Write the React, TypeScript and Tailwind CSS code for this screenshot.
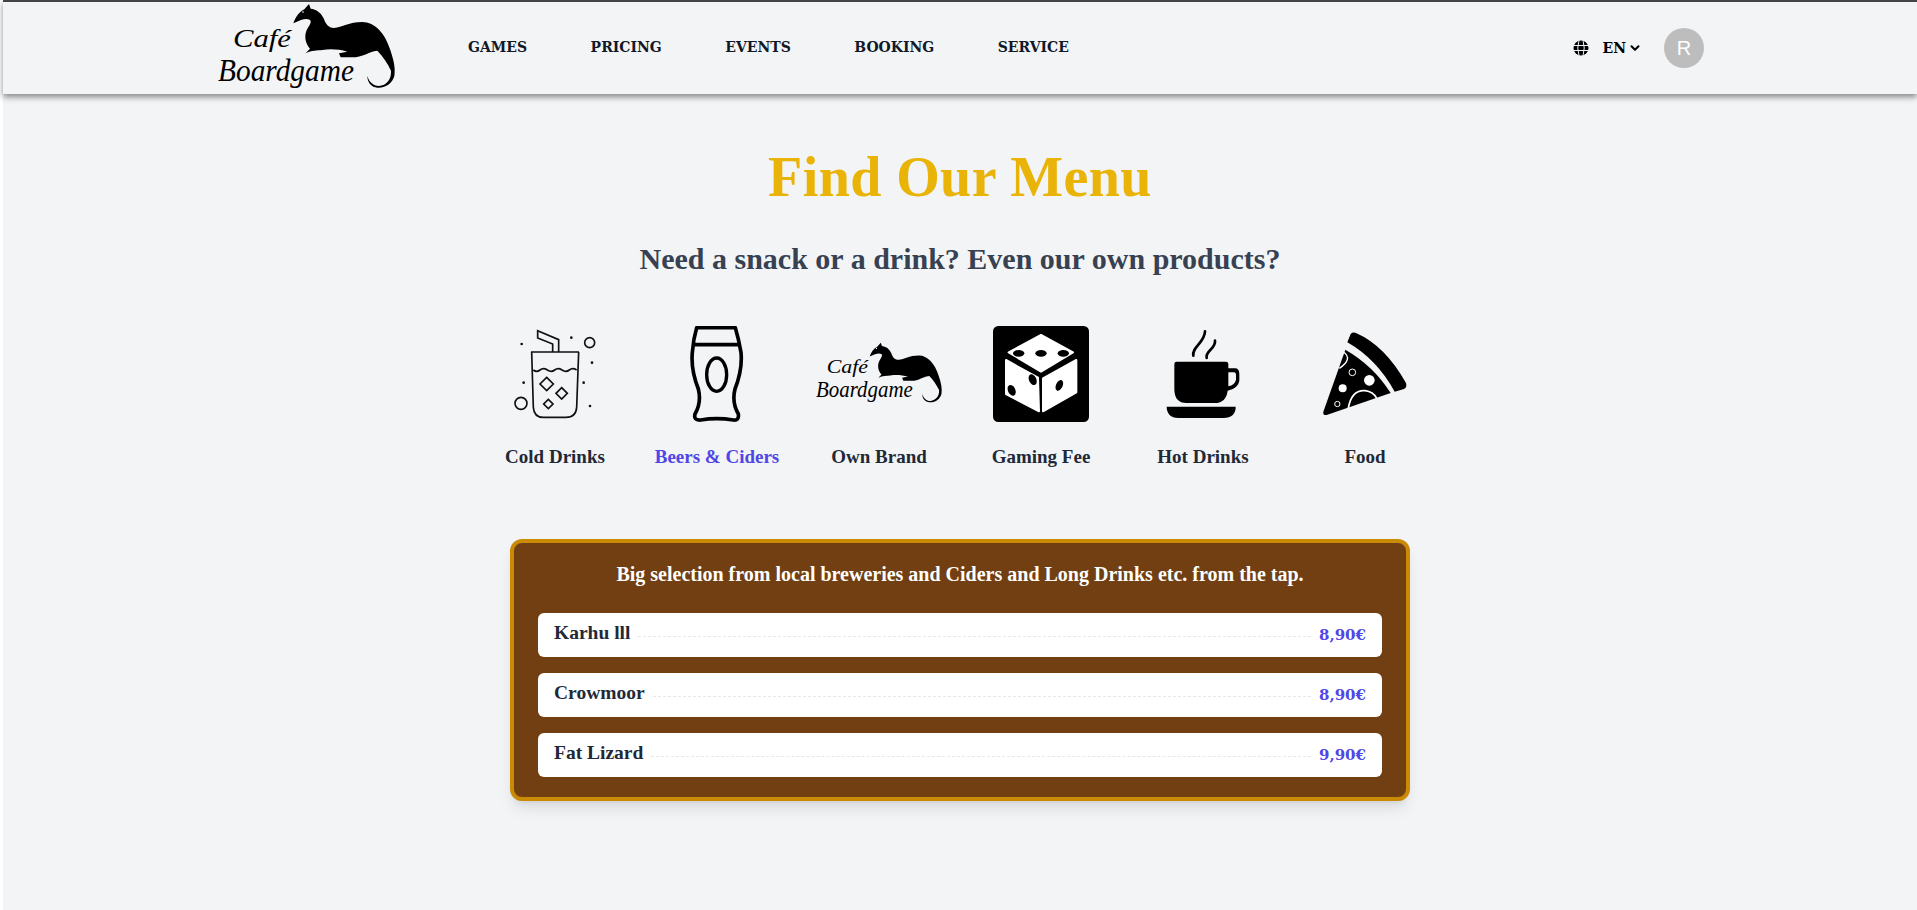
import React from 'react';
import { ChevronDown } from 'lucide-react';

const serif = 'font-["Liberation_Serif",serif]';

const NAV = ['GAMES', 'PRICING', 'EVENTS', 'BOOKING', 'SERVICE'];

const ITEMS = [
  { name: 'Karhu lll', price: '8,90€' },
  { name: 'Crowmoor', price: '8,90€' },
  { name: 'Fat Lizard', price: '9,90€' },
];

const Logo = ({ className }: { className: string }) => (
  <svg viewBox="18 3 179 90" className={className}>
    <path
      transform="scale(0.3333)"
      fill="#000"
      d="M283 70 C290 52 298 38 316 28 L330 12 L335 26 C352 28 366 38 374 55 C380 72 388 84 405 84 C430 82 450 66 490 66 C528 66 558 100 574 150 C584 180 590 205 586 228 C580 250 560 265 535 263 C518 262 505 248 505 228 C510 245 522 258 540 258 C562 256 578 238 576 212 C566 190 552 170 535 152 C520 152 500 166 470 172 L425 172 L420 160 L445 155 C420 148 395 146 370 150 C355 152 338 150 320 160 L333 146 C318 130 314 105 326 85 C334 72 338 66 333 60 C323 54 310 57 283 70 Z"
    />
    <circle cx="104" cy="12" r="0.8" fill="#fff" />
    <text
      x="34"
      y="47"
      fontSize="26"
      fontStyle="italic"
      fontFamily="'Liberation Serif', serif"
      textLength="58"
      lengthAdjust="spacingAndGlyphs"
    >
      Café
    </text>
    <text
      x="19"
      y="81"
      fontSize="31"
      fontStyle="italic"
      fontFamily="'Liberation Serif', serif"
      textLength="136"
      lengthAdjust="spacingAndGlyphs"
    >
      Boardgame
    </text>
  </svg>
);

const DrinkIcon = () => (
  <svg viewBox="81 51 288 288" className="w-24 h-24" fill="none" stroke="#111" strokeWidth="5">
    <path d="M153 129 H297 M155 129 L160 295 Q162 325 190 325 H258 Q288 325 290 295 L296 129" />
    <path d="M160 183 q10 8 20 0 t22 0 t22 0 t22 0 t22 0 t22 0" />
    <path d="M218 129 V105 L173 87 V65 L236 92 V129" />
    <path d="M200 205 L220 225 L200 245 L180 225 Z M245 236 L262 253 L245 270 L228 253 Z M205 271 L219 285 L205 299 L191 285 Z" />
    <circle cx="329" cy="101" r="15" />
    <circle cx="123" cy="283" r="18" />
    <g fill="#111" stroke="none">
      <circle cx="125" cy="105" r="4" />
      <circle cx="274" cy="86" r="4" />
      <circle cx="336" cy="161" r="4" />
      <circle cx="131" cy="221" r="4" />
      <circle cx="311" cy="221" r="4" />
      <circle cx="330" cy="291" r="4" />
    </g>
  </svg>
);

const BeerIcon = () => (
  <svg viewBox="567 51 288 288" className="w-24 h-24" fill="none" stroke="#000" strokeWidth="11" strokeLinejoin="round">
    <path d="M650 56 H766 Q776 90 783 130 Q788 180 765 240 Q755 280 775 315 Q778 335 760 333 Q710 325 662 333 Q640 335 645 315 Q665 280 655 240 Q632 180 637 130 Q640 90 650 56 Z" />
    <path d="M637 107 H782" />
    <ellipse cx="710" cy="197" rx="30" ry="50" strokeWidth="10" />
  </svg>
);

const DiceIcon = () => (
  <svg viewBox="99 51 288 288" className="w-24 h-24">
    <rect x="99" y="51" width="288" height="288" rx="16" fill="#000" />
    <g fill="#fff" stroke="#fff" strokeWidth="6" strokeLinejoin="round">
      <path d="M243 78 L339 130 L243 188 L146 130 Z" />
      <path d="M138 153 L234 206 L237 307 L138 255 Z" />
      <path d="M349 153 L249 208 L249 307 L349 250 Z" />
    </g>
    <g fill="#000">
      <ellipse cx="176" cy="133" rx="17" ry="10" />
      <ellipse cx="243" cy="133" rx="17" ry="10" />
      <ellipse cx="310" cy="133" rx="17" ry="10" />
      <ellipse cx="218" cy="212" rx="11" ry="17" transform="rotate(-25 218 212)" />
      <ellipse cx="155" cy="244" rx="11" ry="17" transform="rotate(-25 155 244)" />
      <ellipse cx="298" cy="229" rx="10" ry="17" transform="rotate(25 298 229)" />
    </g>
  </svg>
);

const CupIcon = () => (
  <svg viewBox="585 51 288 288" className="w-24 h-24">
    <path
      fill="#000"
      fillRule="evenodd"
      d="M643 165 Q643 158 650 158 H798 Q805 158 805 165 V178 H825 Q838 178 838 195 V215 Q835 238 803 245 Q798 282 765 282 H680 Q643 282 643 240 Z M805 190 H822 Q828 190 828 200 V212 Q825 228 805 232 Z"
    />
    <path fill="#000" d="M620 293 H827 Q828 325 790 327 H655 Q620 325 620 293 Z" />
    <g fill="none" stroke="#000" strokeWidth="8" strokeLinecap="round">
      <path d="M700 140 C695 115 735 100 735 67" />
      <path d="M740 147 C735 125 768 120 765 95" />
    </g>
  </svg>
);

const PizzaIcon = () => (
  <svg viewBox="1071 51 288 288" className="w-24 h-24">
    <path fill="#000" d="M1162 100 L1172 75 Q1178 68 1188 72 Q1275 110 1338 222 Q1342 236 1332 240 L1304 248 Q1250 150 1162 100 Z" />
    <path fill="#000" d="M1156 122 Q1240 170 1292 252 L1100 318 Q1088 320 1090 308 Z" />
    <g fill="none" stroke="#fff">
      <path d="M1150 128 Q1180 150 1138 178" strokeWidth="4" />
      <path d="M1165 297 Q1175 242 1215 245 Q1240 248 1250 268" strokeWidth="5" />
      <circle cx="1177" cy="190" r="10" strokeWidth="3" />
      <circle cx="1132" cy="285" r="8" strokeWidth="3" />
    </g>
    <circle cx="1228" cy="214" r="16" fill="#fff" />
    <circle cx="1148" cy="238" r="12" fill="#fff" />
  </svg>
);

const CATEGORIES = [
  { label: 'Cold Drinks', icon: <DrinkIcon /> },
  { label: 'Beers & Ciders', icon: <BeerIcon />, active: true },
  { label: 'Own Brand', icon: <Logo className="w-[128px] h-[64px]" /> },
  { label: 'Gaming Fee', icon: <DiceIcon /> },
  { label: 'Hot Drinks', icon: <CupIcon /> },
  { label: 'Food', icon: <PizzaIcon /> },
];

const GlobeIcon = () => (
  <svg viewBox="0 0 16 16" className="w-4 h-4" fill="none" stroke="#000">
    <circle cx="8" cy="8" r="7.5" fill="#000" stroke="none" />
    <path d="M0.5 5.5 H15.5 M0.5 10.5 H15.5 M6 0.5 Q3.5 8 6 15.5 M10 0.5 Q12.5 8 10 15.5" stroke="#f3f4f6" strokeWidth="1" />
  </svg>
);

export default function App() {
  return (
    <div className={`h-[910px] overflow-hidden pl-[3px] bg-white ${serif}`}>
      <div className="h-full bg-[#f3f4f6]">
        <nav className="h-[94px] border-t-2 border-[#444] bg-[#f3f4f6] shadow-[0_3px_6px_rgba(0,0,0,0.45)]">
          <div className="mx-auto flex h-full max-w-[1536px] items-center px-6">
            <Logo className="w-[181px] h-[90px]" />
            <ul className="ml-[71px] flex gap-[63.5px] pb-[3px]">
              {NAV.map(item => (
                <li key={item} className="font-['DejaVu_Serif',serif] text-sm font-bold text-[#111827]">
                  {item}
                </li>
              ))}
            </ul>
            <div className="ml-auto flex items-center">
              <GlobeIcon />
              <span className="ml-[14px] font-['DejaVu_Serif',serif] text-sm font-bold text-black">EN</span>
              <ChevronDown size={14} strokeWidth={3.5} className="ml-[2px] text-black" />
              <div className="ml-[22px] flex h-10 w-10 items-center justify-center rounded-full bg-[#bdbdbd] font-['Liberation_Sans',sans-serif] text-xl text-white">
                R
              </div>
            </div>
          </div>
        </nav>

        <main className="flex flex-col items-center">
          <h1 className="mt-[51px] text-[56px] leading-[64px] font-bold tracking-[0.4px] text-[#eab308]">Find Our Menu</h1>
          <h2 className="mt-[34px] text-[30px] leading-8 font-bold text-[#374151]">
            Need a snack or a drink? Even our own products?
          </h2>

          <div className="mt-[51px] grid w-[972px] grid-cols-6">
            {CATEGORIES.map(cat => (
              <div key={cat.label} className="flex flex-col items-center">
                <div className="flex h-24 items-center justify-center">{cat.icon}</div>
                <span className={`mt-[23px] text-[19px] leading-6 font-bold ${cat.active ? 'text-[#4f46e5]' : 'text-[#1f2937]'}`}>
                  {cat.label}
                </span>
              </div>
            ))}
          </div>

          <section className="mt-[70px] w-[900px] rounded-xl border-4 border-[#ca8a04] bg-[#713f12] px-6 pt-[17px] pb-5 shadow-lg">
            <p className="text-center text-xl leading-7 font-bold text-white">
              Big selection from local breweries and Ciders and Long Drinks etc. from the tap.
            </p>
            <div className="mt-[25px] flex flex-col gap-4">
              {ITEMS.map(item => (
                <div key={item.name} className="flex h-11 items-center gap-2 rounded-md bg-white px-4">
                  <span className="pb-1 text-[19.5px] leading-6 font-bold text-[#1f2937]">{item.name}</span>
                  <span className="mt-[2px] flex-1 border-b border-dashed border-[#e5e7eb]" />
                  <span className="font-['DejaVu_Serif',serif] text-[15px] leading-6 font-bold text-[#4f46e5]">{item.price}</span>
                </div>
              ))}
            </div>
          </section>
        </main>
      </div>
    </div>
  );
}
